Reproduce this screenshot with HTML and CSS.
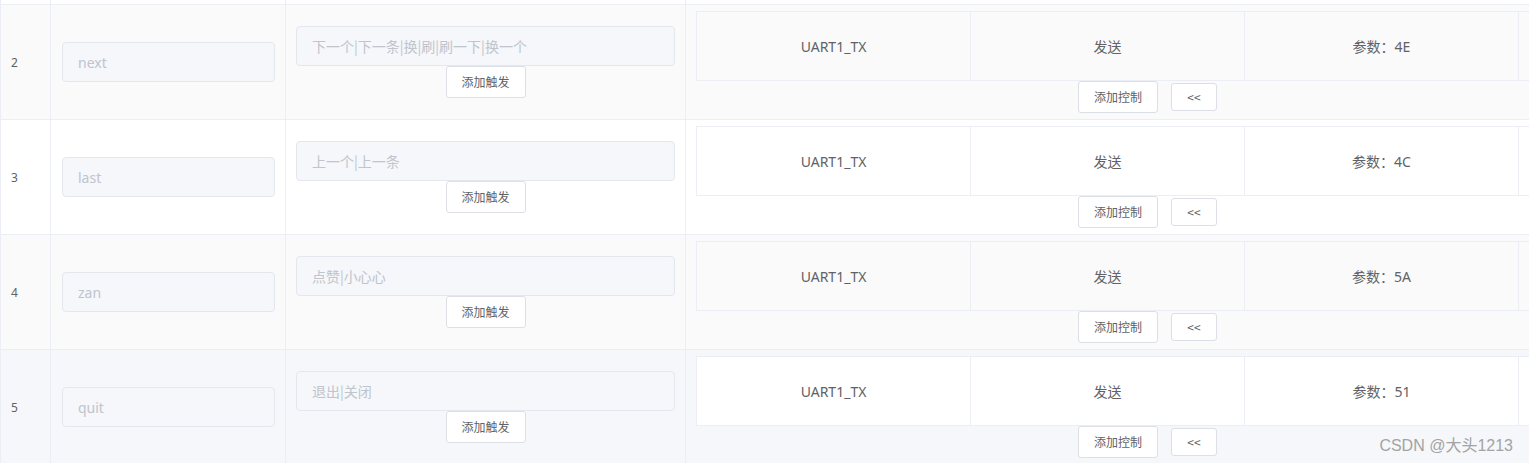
FILE: index.html
```html
<!DOCTYPE html>
<html lang="zh-CN">
<head>
<meta charset="utf-8">
<title>触发控制表</title>
<link rel="stylesheet" href="styles.css">
</head>
<body>
<div class="table">
  <div class="row row-cut">
    <div class="cell"></div><div class="cell"></div><div class="cell"></div><div class="cell"></div>
  </div>

  <div class="row striped">
    <div class="cell c-index">2</div>
    <div class="cell c-name"><input class="field" disabled value="next"></div>
    <div class="cell c-trigger">
      <input class="field field-cjk" disabled value="下一个|下一条|换|刷|刷一下|换一个">
      <button class="btn btn-small">添加触发</button>
    </div>
    <div class="cell c-control">
      <div class="inner">
        <div class="icell">UART1_TX</div>
        <div class="icell">发送</div>
        <div class="icell">参数：4E</div>
        <div class="icell"></div>
      </div>
      <div class="actions">
        <button class="btn btn-small">添加控制</button>
        <button class="btn btn-mini">&lt;&lt;</button>
      </div>
    </div>
  </div>

  <div class="row">
    <div class="cell c-index">3</div>
    <div class="cell c-name"><input class="field" disabled value="last"></div>
    <div class="cell c-trigger">
      <input class="field field-cjk" disabled value="上一个|上一条">
      <button class="btn btn-small">添加触发</button>
    </div>
    <div class="cell c-control">
      <div class="inner">
        <div class="icell">UART1_TX</div>
        <div class="icell">发送</div>
        <div class="icell">参数：4C</div>
        <div class="icell"></div>
      </div>
      <div class="actions">
        <button class="btn btn-small">添加控制</button>
        <button class="btn btn-mini">&lt;&lt;</button>
      </div>
    </div>
  </div>

  <div class="row striped">
    <div class="cell c-index">4</div>
    <div class="cell c-name"><input class="field" disabled value="zan"></div>
    <div class="cell c-trigger">
      <input class="field field-cjk" disabled value="点赞|小心心">
      <button class="btn btn-small">添加触发</button>
    </div>
    <div class="cell c-control">
      <div class="inner">
        <div class="icell">UART1_TX</div>
        <div class="icell">发送</div>
        <div class="icell">参数：5A</div>
        <div class="icell"></div>
      </div>
      <div class="actions">
        <button class="btn btn-small">添加控制</button>
        <button class="btn btn-mini">&lt;&lt;</button>
      </div>
    </div>
  </div>

  <div class="row hover">
    <div class="cell c-index">5</div>
    <div class="cell c-name"><input class="field" disabled value="quit"></div>
    <div class="cell c-trigger">
      <input class="field field-cjk" disabled value="退出|关闭">
      <button class="btn btn-small">添加触发</button>
    </div>
    <div class="cell c-control">
      <div class="inner">
        <div class="icell">UART1_TX</div>
        <div class="icell">发送</div>
        <div class="icell">参数：51</div>
        <div class="icell"></div>
      </div>
      <div class="actions">
        <button class="btn btn-small">添加控制</button>
        <button class="btn btn-mini">&lt;&lt;</button>
      </div>
    </div>
  </div>
</div>
<div class="watermark">CSDN @大头1213</div>
</body>
</html>
```

FILE: styles.css
```css
* {
  box-sizing: border-box;
}

html, body {
  margin: 0;
  padding: 0;
  background: #ffffff;
  overflow: hidden;
}

body {
  position: relative;
  width: 1529px;
  height: 463px;
  font-family: "Noto Sans", "Noto Sans CJK SC", sans-serif;
  color: #606266;
}

.table {
  width: 1529px;
  overflow: hidden;
  border-left: 1px solid #ebeef5;
}

.row {
  display: grid;
  grid-template-columns: 50px 235px 400px 922px;
  width: 1608px;
  height: 115px;
  border-bottom: 1px solid #ebeef5;
  background: #ffffff;
}

.row-cut {
  height: 5px;
}

.row.striped {
  background: #fafafa;
}

.row.hover {
  background: #f5f7fa;
}

.cell {
  border-right: 1px solid #ebeef5;
  display: flex;
  align-items: center;
  min-width: 0;
}

.c-index {
  padding-left: 10px;
  font-size: 12px;
}

.c-name {
  padding: 0 10px 0 11px;
}

.c-trigger {
  padding: 0 10px;
  flex-direction: column;
  justify-content: center;
  align-items: center;
}

.c-control {
  padding: 0 10px;
  flex-direction: column;
  justify-content: center;
  align-items: stretch;
}

.field {
  display: block;
  width: 100%;
  height: 40px;
  margin: 0;
  padding: 0 15px;
  border: 1px solid #e4e7ed;
  border-radius: 4px;
  background: #f5f7fa;
  color: #c0c4cc;
  -webkit-text-fill-color: #c0c4cc;
  font-family: "Noto Sans", "Noto Sans CJK SC", sans-serif;
  font-size: 14px;
  opacity: 1;
  outline: none;
}

.field-cjk {
  font-family: "Noto Sans CJK SC", sans-serif;
}

.btn {
  display: inline-flex;
  align-items: center;
  justify-content: center;
  margin: 0;
  background: #ffffff;
  border: 1px solid #dcdfe6;
  border-radius: 3px;
  color: #606266;
  font-family: "Noto Sans CJK SC", "Noto Sans", sans-serif;
  font-size: 12px;
  line-height: 1;
  cursor: pointer;
}

.btn-small {
  width: 80px;
  height: 32px;
  padding: 0;
}

.btn-mini {
  width: 46px;
  height: 28px;
  padding: 0;
}

.inner {
  display: flex;
  width: 1096px;
  flex-shrink: 0;
  border-left: 1px solid #ebeef5;
  border-top: 1px solid #ebeef5;
}

.row.hover .inner {
  background: #ffffff;
}

.icell {
  width: 274px;
  height: 69px;
  flex-shrink: 0;
  display: flex;
  align-items: center;
  justify-content: center;
  border-right: 1px solid #ebeef5;
  border-bottom: 1px solid #ebeef5;
  font-size: 14px;
  color: #606266;
}

.actions {
  display: flex;
  align-items: center;
  justify-content: center;
  gap: 13px;
  width: 902px;
  height: 32px;
  padding-left: 1px;
}

.watermark {
  position: absolute;
  right: 16px;
  top: 436px;
  font-family: "Liberation Sans", "Noto Sans CJK SC", sans-serif;
  font-size: 16px;
  line-height: 20px;
  color: #a3a3a3;
  white-space: nowrap;
}
```
